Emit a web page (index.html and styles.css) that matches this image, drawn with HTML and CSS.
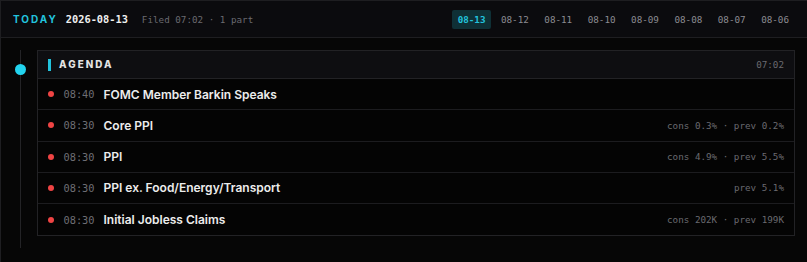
FILE: index.html
```html
<!DOCTYPE html>
<html>
<head>
<meta charset="utf-8">
<link rel="stylesheet" href="styles.css">
</head>
<body>
<div class="frame">
  <header class="topbar">
    <span class="today">TODAY</span>
    <span class="date">2026-08-13</span>
    <span class="meta">Filed 07:02 · 1 part</span>
    <nav class="days">
      <span class="day active">08-13</span>
      <span class="day">08-12</span>
      <span class="day">08-11</span>
      <span class="day">08-10</span>
      <span class="day">08-09</span>
      <span class="day">08-08</span>
      <span class="day">08-07</span>
      <span class="day">08-06</span>
    </nav>
  </header>
  <main class="feed">
    <div class="rail"><span class="node"></span></div>
    <section class="card">
      <div class="card-head">
        <span class="bar"></span>
        <span class="card-title">AGENDA</span>
        <span class="card-time">07:02</span>
      </div>
      <div class="row">
        <span class="dot"></span><span class="time">08:40</span><span class="title">FOMC Member Barkin Speaks</span><span class="vals"></span>
      </div>
      <div class="row">
        <span class="dot"></span><span class="time">08:30</span><span class="title">Core PPI</span><span class="vals">cons 0.3% · prev 0.2%</span>
      </div>
      <div class="row">
        <span class="dot"></span><span class="time">08:30</span><span class="title">PPI</span><span class="vals">cons 4.9% · prev 5.5%</span>
      </div>
      <div class="row">
        <span class="dot"></span><span class="time">08:30</span><span class="title">PPI ex. Food/Energy/Transport</span><span class="vals">prev 5.1%</span>
      </div>
      <div class="row">
        <span class="dot"></span><span class="time">08:30</span><span class="title">Initial Jobless Claims</span><span class="vals">cons 202K · prev 199K</span>
      </div>
    </section>
  </main>
</div>
</body>
</html>
```
FILE: styles.css
```css
* { box-sizing: border-box; }
html, body { margin: 0; padding: 0; }
body {
  background: #060606;
  font-family: Inter, "Noto Sans", sans-serif;
  color: #e6e6e6;
}
.frame {
  border-top: 1px solid #1e1e21;
  border-left: 1px solid #1e1e21;
  min-height: 262px;
}
.topbar {
  height: 37px;
  background: #0b0b0e;
  border-bottom: 1px solid #1e1e21;
  display: flex;
  align-items: center;
  padding: 0 12px;
}
.today {
  font-size: 10px;
  font-weight: 700;
  letter-spacing: 2px;
  color: #22c3dd;
}
.date {
  font-family: "DejaVu Sans Mono", monospace;
  font-size: 10.3px;
  font-weight: 700;
  color: #f0f0f0;
  margin-left: 8px;
}
.meta {
  font-family: "DejaVu Sans Mono", monospace;
  font-size: 9.25px;
  color: #6a6a70;
  margin-left: 14px;
}
.days {
  margin-left: auto;
  display: flex;
  gap: 3.5px;
}
.day {
  font-family: "DejaVu Sans Mono", monospace;
  font-size: 9.25px;
  color: #8c8c92;
  padding: 0 6px;
  height: 19px;
  line-height: 19px;
  border-radius: 2px;
}
.day.active {
  background: #0f3036;
  color: #22c3dd;
  font-weight: 700;
}
.feed {
  display: flex;
  padding-top: 12px;
  padding-right: 12px;
}
.rail {
  width: 36px;
  flex: none;
  background: linear-gradient(#232326, #232326) no-repeat 19px 0 / 1px 100%;
  display: flex;
  flex-direction: column;
  align-items: flex-start;
}
.node {
  width: 11px;
  height: 11px;
  border-radius: 50%;
  background: #22d3ee;
  margin-top: 13.5px;
  margin-left: 14px;
}
.card {
  flex: 1;
  border: 1px solid #222225;
  margin-bottom: 12px;
  background: #040404;
}
.card-head {
  height: 28px;
  background: #0e0e11;
  border-bottom: 1px solid #222225;
  display: flex;
  align-items: center;
  padding: 0 10px;
}
.bar {
  width: 3px;
  height: 12px;
  background: #22c3dd;
  margin-right: 8px;
}
.card-title {
  font-size: 9.8px;
  font-weight: 800;
  letter-spacing: 2.1px;
  color: #e4e4e4;
}
.card-time {
  margin-left: auto;
  font-family: "DejaVu Sans Mono", monospace;
  font-size: 9.25px;
  color: #6a6a70;
}
.row {
  height: 31.25px;
  display: flex;
  align-items: center;
  padding: 0 10px;
  border-bottom: 1px solid #1c1c1f;
}
.row:last-child { border-bottom: none; }
.dot {
  width: 6px;
  height: 6px;
  border-radius: 50%;
  background: #ef4444;
  flex: none;
}
.time {
  font-family: "DejaVu Sans Mono", monospace;
  font-size: 10.3px;
  color: #6e6e74;
  margin-left: 9.5px;
}
.title {
  font-size: 12px;
  font-weight: 600;
  color: #ececec;
  margin-left: 9px;
}
.vals {
  margin-left: auto;
  font-family: "DejaVu Sans Mono", monospace;
  font-size: 9.25px;
  color: #6a6a70;
}
```
